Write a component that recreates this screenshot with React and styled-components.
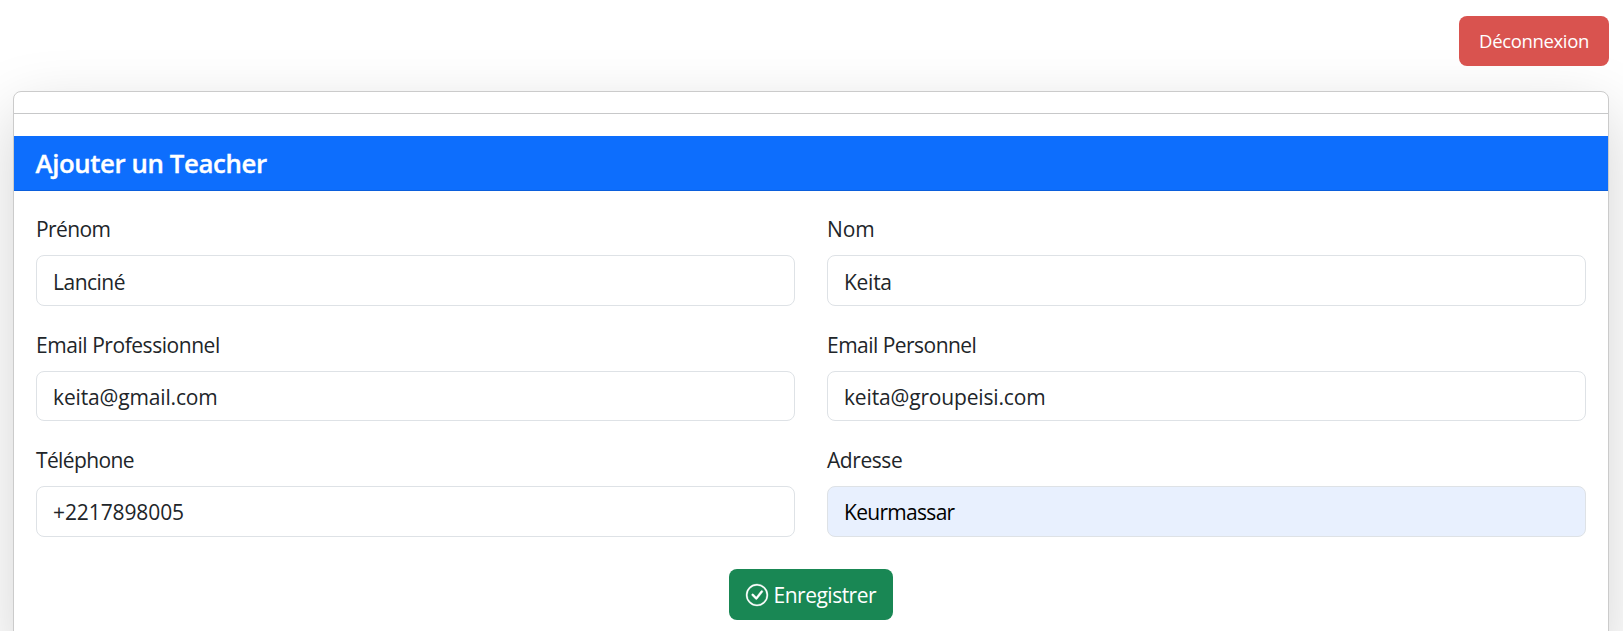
import React from "react";
import styled, { createGlobalStyle } from "styled-components";

const GlobalStyle = createGlobalStyle`
  *, *::before, *::after { box-sizing: border-box; }
  html, body { margin: 0; height: 631px; overflow: hidden; background: #fff; }
  body {
    font-family: "Segoe UI", "Open Sans", "Noto Sans", sans-serif;
    font-size: 21px;
    line-height: 32px;
    color: #212529;
  }
`;

const Page = styled.main`
  height: 631px;
  overflow: hidden;
  padding: 16px 14px 0 13px;
`;

const TopBar = styled.header`
  display: flex;
  justify-content: flex-end;
  margin-bottom: 25px;
`;

const Text = styled.span`
  white-space: nowrap;
  letter-spacing: ${(p) => p.$spacing || 0}px;
`;

const LogoutButton = styled.button`
  position: relative;
  z-index: 1;
  width: 150px;
  height: 50px;
  padding: 0;
  border: 0;
  border-radius: 8px;
  background: #d9534f;
  color: #fff;
  font: inherit;
  font-size: 18.5px;
`;

const Card = styled.section`
  height: 556px;
  border: 1px solid #cbcbcb;
  border-radius: 8px;
  background: #fff;
  box-shadow: 0 21.33px 64px rgba(0, 0, 0, 0.175);
`;

const Divider = styled.hr`
  height: 1px;
  margin: 21px 0 22px;
  border: 0;
  background: #c7c8c9;
`;

const CardHeader = styled.div`
  display: flex;
  align-items: center;
  height: 55px;
  padding: 0 21.5px 1px;
  border-bottom: 1px solid #0b5fdc;
  background: #0d6efd;
  color: #fff;
`;

const Title = styled.h5`
  margin: 0;
  font-size: 25.8px;
  font-weight: 600;
  line-height: 32px;
  -webkit-text-stroke: 0.35px currentColor;
`;

const Form = styled.form`
  padding: 22px 22px 0;
`;

const Fields = styled.div`
  display: grid;
  grid-template-columns: 1fr 1fr;
  column-gap: 32px;
  row-gap: 21.5px;
`;

const Field = styled.label`
  display: flex;
  flex-direction: column;
  gap: 10px;
  height: 94px;
`;

const Control = styled.input`
  width: 100%;
  height: 50.67px;
  padding: ${(p) => p.$inset || 2.3}px 16px 0;
  border: 1px solid #dee2e6;
  border-radius: 8px;
  outline: none;
  background: ${(p) => (p.$autofilled ? "#e8f0fe" : "#fff")};
  color: ${(p) => (p.$autofilled ? "#000" : "#212529")};
  font: inherit;
  letter-spacing: ${(p) => p.$spacing || 0}px;
`;

const Actions = styled.div`
  display: flex;
  justify-content: center;
  margin-top: 31px;
`;

const SaveButton = styled.button`
  display: flex;
  align-items: center;
  gap: 5.5px;
  width: 164px;
  height: 51px;
  padding: 0 0 0 17px;
  border: 0;
  border-radius: 8px;
  background: #198754;
  color: #fff;
  font: inherit;
`;

const CheckCircle = () => (
  <svg width="22" height="22" viewBox="0 0 16 16" fill="currentColor" stroke="currentColor" strokeWidth="0.25" overflow="visible" aria-hidden="true">
    <path d="M8 15A7 7 0 1 1 8 1a7 7 0 0 1 0 14m0 1A8 8 0 1 0 8 0a8 8 0 0 0 0 16" />
    <path d="m10.97 4.97-.02.022-3.473 4.425-2.093-2.094a.75.75 0 0 0-1.06 1.06L6.97 11.03a.75.75 0 0 0 1.079-.02l3.992-4.99a.75.75 0 0 0-1.071-1.05" />
  </svg>
);

const fields = [
  { label: "Prénom", value: "Lanciné", ls: -0.6, vs: -0.5, inset: 3.4 },
  { label: "Nom", value: "Keita", ls: -0.1, vs: -0.27, inset: 3.4 },
  { label: "Email Professionnel", value: "keita@gmail.com", ls: -0.45, vs: -0.15 },
  { label: "Email Personnel", value: "keita@groupeisi.com", ls: -0.53, vs: -0.16 },
  { label: "Téléphone", value: "+2217898005", ls: -0.62, vs: -0.1 },
  { label: "Adresse", value: "Keurmassar", ls: -0.43, vs: -0.7, autofilled: true },
];

export default function App() {
  return (
    <>
      <GlobalStyle />
      <Page>
        <TopBar>
          <LogoutButton type="button">
            <Text $spacing={-0.35}>Déconnexion</Text>
          </LogoutButton>
        </TopBar>
        <Card>
          <Divider />
          <CardHeader>
            <Title>
              <Text $spacing={-0.4}>Ajouter un Teacher</Text>
            </Title>
          </CardHeader>
          <Form>
            <Fields>
              {fields.map((f) => (
                <Field key={f.label}>
                  <Text $spacing={f.ls}>{f.label}</Text>
                  <Control
                    type="text"
                    defaultValue={f.value}
                    $spacing={f.vs}
                    $inset={f.inset}
                    $autofilled={f.autofilled}
                  />
                </Field>
              ))}
            </Fields>
            <Actions>
              <SaveButton type="button">
                <CheckCircle />
                <Text $spacing={-0.5}>Enregistrer</Text>
              </SaveButton>
            </Actions>
          </Form>
        </Card>
      </Page>
    </>
  );
}
